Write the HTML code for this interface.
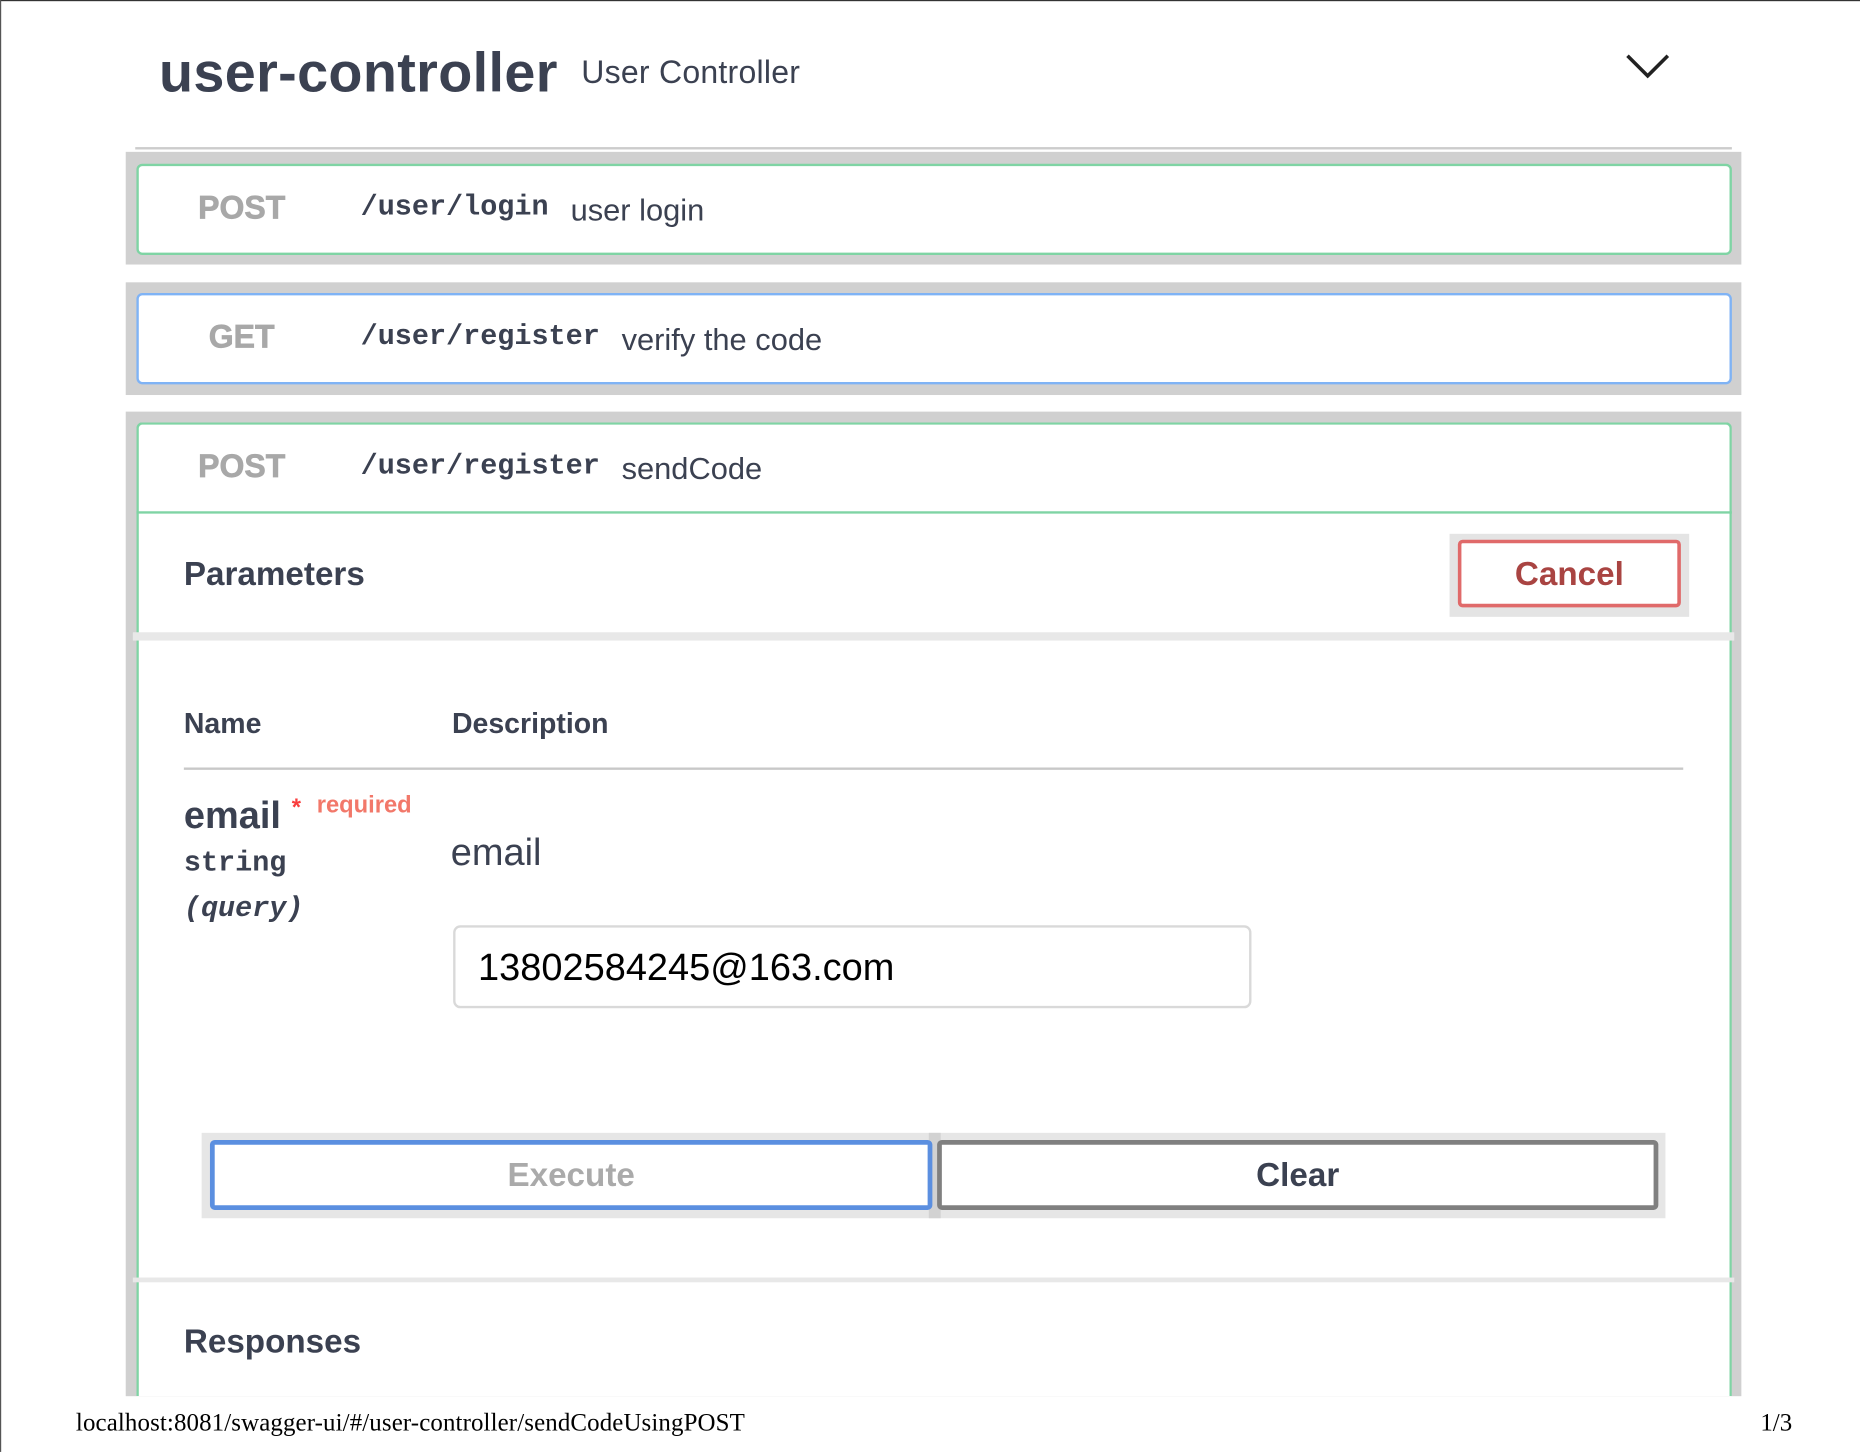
<!DOCTYPE html>
<html><head><meta charset="utf-8"><style>
*{box-sizing:border-box;margin:0;padding:0}
body{width:1860px;height:1452px;overflow:hidden;background:#fff;font-family:"Liberation Sans",sans-serif;color:#3b4151}
#w{position:absolute;left:0;top:0;width:1568px;height:1224px;transform:scale(1.18622);transform-origin:0 0}
.a{position:absolute}
.mono{font-family:"Liberation Mono",monospace;font-weight:bold}
.m{color:#a8a8a8;font-weight:900;font-size:27px;-webkit-text-stroke:0.6px #a8a8a8}
</style></head><body><div id="w">
<div class="a" style="left:0;top:0;width:1568px;height:1px;background:#333"></div>
<div class="a" style="left:0;top:0;width:1px;height:1224px;background:#555"></div>
<div class="a" style="left:134px;top:33px;font-size:47px;font-weight:bold;letter-spacing:0.3px">user-controller</div>
<div class="a" style="left:490px;top:46px;font-size:27px;letter-spacing:0.2px">User Controller</div>
<svg class="a" style="left:1370px;top:44px" width="38" height="24"><path d="M2 3 L19 20 L36 3" fill="none" stroke="#222" stroke-width="3"/></svg>
<div class="a" style="left:114px;top:124px;width:1346px;height:2px;background:#ccc"></div>

<div class="a" style="left:106px;top:128px;width:1362px;height:95px;background:#d0d0d0"></div>
<div class="a" style="left:115px;top:138px;width:1345px;height:77px;background:#fff;border:2px solid #7fd4a4;border-radius:5px"></div>
<div class="a m" style="left:167px;top:160px">POST</div>
<div class="a mono" style="left:304px;top:162px;font-size:24px">/user/login</div>
<div class="a" style="left:481px;top:162px;font-size:26px">user login</div>

<div class="a" style="left:106px;top:238px;width:1362px;height:95px;background:#d0d0d0"></div>
<div class="a" style="left:115px;top:247px;width:1345px;height:77px;background:#fff;border:2px solid #7fb3f5;border-radius:5px"></div>
<div class="a m" style="left:176px;top:269px">GET</div>
<div class="a mono" style="left:304px;top:271px;font-size:24px">/user/register</div>
<div class="a" style="left:524px;top:271px;font-size:26px">verify the code</div>

<div class="a" style="left:106px;top:347px;width:1362px;height:830px;background:#d0d0d0"></div>
<div class="a" style="left:115px;top:356px;width:1345px;height:821px;background:#fff;border:2px solid #7fd4a4;border-bottom:none;border-radius:5px 5px 0 0"></div>
<div class="a m" style="left:167px;top:378px">POST</div>
<div class="a mono" style="left:304px;top:380px;font-size:24px">/user/register</div>
<div class="a" style="left:524px;top:380px;font-size:26px">sendCode</div>
<div class="a" style="left:115px;top:431px;width:1345px;height:2px;background:#7fd4a4"></div>
<div class="a" style="left:112px;top:533px;width:1350px;height:7px;background:#e8e8e8"></div>
<div class="a" style="left:155px;top:468px;font-size:28px;font-weight:bold">Parameters</div>
<div class="a" style="left:1222px;top:450px;width:202px;height:70px;background:#e4e4e4"></div>
<div class="a" style="left:1229px;top:455px;width:188px;height:57px;background:#fff;border:3px solid #e06a6a;border-radius:4px;color:#a94442;font-size:28px;font-weight:bold;text-align:center;line-height:51px">Cancel</div>

<div class="a" style="left:155px;top:597px;font-size:24px;font-weight:bold">Name</div>
<div class="a" style="left:381px;top:597px;font-size:24px;font-weight:bold">Description</div>
<div class="a" style="left:155px;top:647px;width:1264px;height:2px;background:#c8c8c8"></div>
<div class="a" style="left:155px;top:669px;font-size:32px;font-weight:bold">email</div>
<div class="a" style="left:246px;top:670px;font-size:20px;color:#f93e3e;font-weight:bold">*</div>
<div class="a" style="left:267px;top:668px;font-size:20px;color:#f2786a;font-weight:bold">required</div>
<div class="a mono" style="left:155px;top:715px;font-size:24px">string</div>
<div class="a mono" style="left:155px;top:753px;font-size:24px;font-style:italic">(query)</div>
<div class="a" style="left:380px;top:700px;font-size:32px">email</div>
<div class="a" style="left:382px;top:780px;width:673px;height:70px;border:2px solid #d9d9d9;border-radius:6px;font-size:32px;color:#000;padding-left:19px;line-height:66px">13802584245@163.com</div>

<div class="a" style="left:170px;top:955px;width:1234px;height:72px;background:#e6e6e6"></div>
<div class="a" style="left:783px;top:955px;width:10px;height:72px;background:#d2d2d2"></div>
<div class="a" style="left:177px;top:961px;width:609px;height:59px;background:#fff;border:4px solid #5b8fe0;border-radius:4px;color:#aaa;font-size:28px;font-weight:bold;text-align:center;line-height:51px">Execute</div>
<div class="a" style="left:790px;top:961px;width:608px;height:59px;background:#fff;border:4px solid #808080;border-radius:4px;color:#3b4151;font-size:28px;font-weight:bold;text-align:center;line-height:51px">Clear</div>

<div class="a" style="left:112px;top:1077px;width:1350px;height:4px;background:#e8e8e8"></div>
<div class="a" style="left:155px;top:1115px;font-size:28px;font-weight:bold">Responses</div>

<div class="a" style="left:64px;top:1187px;font-family:'Liberation Serif',serif;font-size:21px;letter-spacing:0.1px;color:#000">localhost:8081/swagger-ui/#/user-controller/sendCodeUsingPOST</div>
<div class="a" style="left:1484px;top:1187px;font-family:'Liberation Serif',serif;font-size:21px;color:#000">1/3</div>
</div></body></html>
